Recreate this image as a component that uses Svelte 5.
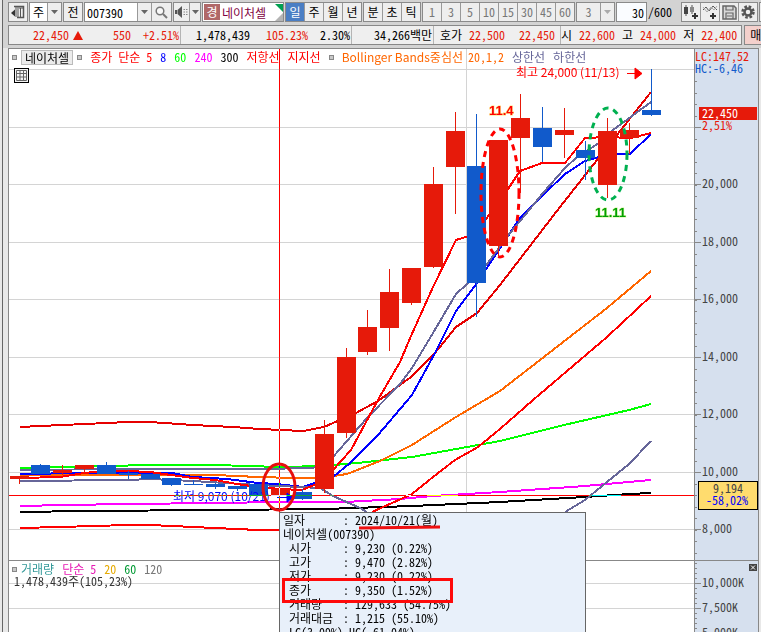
<script>
  const minutes = [1, 3, 5, 10, 15, 30, 45, 60];
  let period = $state('일');
  let code = $state('007390');
  let name = $state('네이처셀');
  let count = $state('30');

  // center x, body top, body bottom, high, low, rising
  const candles = [
    [19, 476, 479, 476, 484, 1], [40, 465, 474, 464, 474, 0], [62, 470, 473, 465, 475, 1],
    [84, 465, 469, 465, 473, 1], [106, 465, 474, 462, 474, 0], [128, 473, 475, 471, 479, 0],
    [150, 474, 479, 474, 479, 0], [171, 478, 485, 478, 486, 0], [193, 484, 485, 480, 485, 0],
    [215, 484, 487, 483, 489, 0], [237, 486, 489, 486, 491, 0], [258, 484, 496, 484, 496, 0],
    [280, 489, 496, 488, 496, 1], [302, 492, 499, 489, 500, 0], [324, 434, 489, 420, 493, 1],
    [346, 357, 433, 348, 438, 1], [367, 327, 352, 310, 355, 1], [389, 292, 328, 269, 351, 1],
    [411, 268, 303, 268, 305, 1], [433, 184, 267, 167, 268, 1], [455, 131, 167, 112, 214, 1],
    [476, 166, 283, 114, 317, 0], [498, 140, 246, 140, 256, 1], [520, 118, 138, 94, 193, 1],
    [542, 128, 147, 107, 162, 0], [564, 130, 135, 108, 158, 1], [585, 150, 158, 141, 180, 0],
    [607, 131, 185, 118, 198, 1], [629, 130, 138, 123, 154, 1], [651, 110, 115, 69, 116, 0]
  ];

  const lines = [
    ['#000000', '20,512 85,511 215,510 325,509 412,506 500,502 585,497 629,494 651,493'],
    ['#ff00ff', '20,506 65,505 128,504 215,503 280,502 345,502 400,499 433,496 500,492 585,486 651,480'],
    ['#00ff00', '20,468 150,465 215,465 280,467 324,466 367,462 412,457 456,449 500,441 564,425 629,410 651,404'],
    ['#e60000', '20,427 40,426 85,424 128,422 150,422 193,425 233,427 260,429 303,431 324,427 356,413 378,401 411,377 435,353 456,327 477,313 500,285 560,207 597,160 617,135 651,92'],
    ['#ff0000', '20,528 60,527 128,525 150,525 215,528 258,530 280,530'],
    ['#ff0000', '372,512 412,494 433,477 455,460 478,447 500,429 533,400 607,337 651,296'],
    ['#ff6600', '20,475 85,475 215,475 258,477 293,478 320,478 347,474 380,461 412,445 456,417 500,391 540,360 607,308 651,271'],
    ['#0000ff', '20,474 83,473 172,473 193,477 227,479 258,483 277,484 303,487 333,477 350,463 378,435 412,395 435,353 456,311 477,283 508,236 520,218 543,195 565,174 585,161 599,157 615,154 630,154 651,134'],
    ['#666699', '20,481 128,480 150,479 193,481 258,485 280,486 320,488 333,496 360,508 367,512'],
    ['#666699', '565,512 585,500 607,482 629,464 651,441'],
    ['#666699', '20,470 128,469 258,469 313,468 333,457 367,418 400,384 412,368 433,333 456,294 467,284 487,264 510,233 521,220 543,193 565,168 577,157 599,143 613,130 651,102'],
    ['#ff0000', '20,478 60,477 84,473 106,471 128,471 150,472 171,475 193,478 215,480 237,484 258,487 280,489 302,490 324,481 333,470 351,450 379,398 400,362 411,336 433,287 456,240 476,234 486,219 508,189 520,171 542,163 565,163 585,138 607,137 631,138 651,133']
  ];

  const priceTicks = [[184, '20,000'], [242, '18,000'], [299, '16,000'], [357, '14,000'], [414, '12,000'], [472, '10,000'], [529, '8,000']];
  const volumeTicks = [[583, '10,000K'], [608, '7,500K'], [633, '5,000K']];
  const minor = Array.from({ length: 42 }, (_, i) => Math.round(81 + i * 11.5));
  const volMinor = Array.from({ length: 14 }, (_, i) => 563 + i * 5);

  const info = [
    ['시가', '9,230 (0.22%)'],
    ['고가', '9,470 (2.82%)'],
    ['저가', '9,230 (0.22%)'],
    ['종가', '9,350 (1.52%)'],
    ['거래량', '129,633 (54.75%)'],
    ['거래대금', '1,215 (55.10%)']
  ];
</script>

{#snippet caret()}
  <svg width="7" height="4" viewBox="0 0 7 4"><path d="M0 0h7L3.500 4z" fill="currentColor" /></svg>
{/snippet}

<main>
  <header class="tools">
    <button class="box w20" aria-label="패널">
      <svg width="14" height="14" viewBox="0 0 14 14"><path d="M3 1.500h9.500v11H6" fill="none" stroke="#555" stroke-width="1.500" /><path d="M4 3h8M9.500 3v9" stroke="#555" /><path d="M5 4v8M7 4v8" stroke="#555" stroke-width="1" /><path d="M0 8l4-3.500v7z" fill="#333" /></svg>
    </button>
    <div class="group white">
      <select class="w17" aria-label="주기"><option>주</option></select>
      <span class="drop w14">{@render caret()}</span>
    </div>
    <button class="box w20">전</button>
    <div class="group white">
      <input class="code" bind:value={code} aria-label="종목코드" />
      <button class="w14" aria-label="코드 목록">{@render caret()}</button>
      <button class="w20" aria-label="검색">
        <svg width="13" height="13" viewBox="0 0 13 13"><circle cx="5" cy="5" r="3.800" fill="#f8f8f8" stroke="#777" stroke-width="1.500" /><path d="M8 8l4 4" stroke="#777" stroke-width="2" /></svg>
      </button>
    </div>
    <div class="group">
      <button class="w15" aria-label="소리">
        <svg width="13" height="12" viewBox="0 0 13 12"><path d="M0 4h2v4H0zM2.500 4L7 0v12L2.500 8z" fill="#555" /><path d="M8.500 3.500h1.500M11 3.500h1.500M8.500 6h1.500M11 6h1.500M8.500 8.500h1.500M11 8.500h1.500" stroke="#888" stroke-width="1.200" /></svg>
      </button>
      <button class="w10" aria-label="소리 설정">{@render caret()}</button>
    </div>
    <div class="group white stock">
      <span class="tag">경</span>
      <input bind:value={name} aria-label="종목명" />
      <svg width="8" height="17" viewBox="0 0 8 17"><path d="M0 0h8v8z" fill="#00a050" /><path d="M8 9v8H0z" fill="#b4b4b4" /></svg>
    </div>
    <div class="group">
      {#each ['일', '주', '월', '년'] as p}
        <button class="w18" class:on={period === p} onclick={() => (period = p)}>{p}</button>
      {/each}
    </div>
    <div class="group">
      {#each ['분', '초', '틱'] as p}
        <button class="w18" class:on={period === p} onclick={() => (period = p)}>{p}</button>
      {/each}
    </div>
    <div class="group dim">
      {#each minutes as m}<button class="w18">{m}</button>{/each}
    </div>
    <div class="group dim">
      <select class="w23" aria-label="분 간격"><option>3</option></select>
      <span class="drop w14">{@render caret()}</span>
    </div>
    <label class="range"><input bind:value={count} aria-label="봉 개수" /><span>/600</span></label>
    <div class="group icons">
      <button class="w18" aria-label="봉 추가"><svg width="16" height="16" viewBox="0 0 16 16"><path d="M3 1v11M9 1v9" stroke="#555" /><path d="M1 3h4v7H1z" fill="#444" /><path d="M7 3h4v5H7z" fill="#888" /><path d="M12 9v6M9 12h6" stroke="#333" stroke-width="2" /></svg></button>
      <button class="w18" aria-label="지표 추가"><svg width="16" height="16" viewBox="0 0 16 16"><path d="M1 6l3-3 3 4 4-5 4 4" fill="none" stroke="#555" /><path d="M1 3l4 5 4-5 3 3 3-4" fill="none" stroke="#aaa" /><path d="M11 9v6M8 12h6" stroke="#333" stroke-width="2" /></svg></button>
      <button class="w18" aria-label="저장"><svg width="15" height="15" viewBox="0 0 15 15"><path d="M1 1h11l2 2v11H1z" fill="#d8d8d8" stroke="#666" stroke-width="1.500" /><path d="M4 1v4h7V1M4 14V8h7v6M5 11h5" fill="none" stroke="#666" stroke-width="1.200" /></svg></button>
      <button class="w18" aria-label="설정"><svg width="14" height="14" viewBox="0 0 14 14"><circle cx="7" cy="7" r="5.500" fill="none" stroke="#555" stroke-width="2.500" stroke-dasharray="2.600 1.720" /><circle cx="7" cy="7" r="3.500" fill="none" stroke="#555" stroke-width="2.500" /></svg></button>
    </div>
    <button class="box more" aria-label="더보기"></button>
  </header>

  <section class="quotes">
    <div class="bar">
      <div class="cell red first"><span>22,450</span><svg width="10" height="9" viewBox="0 0 10 9"><path d="M5 0l5 9H0z" fill="#e61a0a" /></svg><span class="change">550</span><span>+2.51%</span></div>
      <div class="cell second"><span>1,478,439</span><span class="red">105.23%</span><span>2.30%</span></div>
      <div class="cell third"><span>34,266백만</span></div>
      <div class="cell fourth"><span>호가</span><span class="red">22,500</span><span class="red far">22,450</span></div>
      <div class="cell fifth"><span>시</span><span class="red">22,600</span><span>고</span><span class="red">24,000</span><span>저</span><span class="red">22,400</span></div>
    </div>
    <button class="sell">매</button>
  </section>

  <section class="chart">
    <div class="plot">
      <svg class="canvas" width="100%" height="584">
        <svg y="-49" width="100%" height="700" overflow="visible">
          <g stroke="#d4d4d4" shape-rendering="crispEdges">
            {#each [69, 127, 184, 242, 299, 357, 414, 472, 529, 583, 608] as y}
              <line x1="0" x2="100%" y1={y + 0.5} y2={y + 0.5} />
            {/each}
            <line x1="457.5" x2="457.5" y1="48" y2="633" />
            <line x1="0" x2="100%" y1="560.5" y2="560.5" stroke="#888" />
          </g>
        </svg>
        <g transform="translate(-9,-49)">
          <g fill="none" stroke-width="2" shape-rendering="crispEdges">
            {#each lines as [color, points]}<polyline stroke={color} {points} />{/each}
          </g>
          <g shape-rendering="crispEdges">
            {#each candles as [x, top, bottom, high, low, up]}
              <g fill={up ? '#e61a0a' : '#115acb'}>
                <rect x={x} y={high} width="1" height={low - high} />
                <rect x={x - 9} y={top} width="19" height={bottom - top} />
              </g>
            {/each}
          </g>
          <text class="label" x="516" y="77" fill="#ff0000">최고 24,000 (11/13)</text>
          <path d="M627 73.500h8M635 68v11l7-5.500z" stroke="#ff0000" fill="#ff0000" />
          <text class="label" x="173" y="501" fill="#0000ff">최저 9,070 (10/21)</text>
          <path d="M277 497.500h10M287 493v9l6-4.500z" stroke="#0000ff" fill="#0000ff" />
          <text x="14" y="586" fill="#333">1,478,439주(105,23%)</text>
        </g>
        <g class="cross" fill="#00ffff" shape-rendering="crispEdges">
          <rect x="270" y="0" width="1" height="584" />
          <rect x="0" y="446" width="100%" height="1" />
        </g>
      </svg>

      <div class="legend">
        <i></i><span class="chip">네이처셀</span><i></i>
        <span class="r">종가 단순 5</span><span class="b">8</span><span class="g">60</span><span class="m">240</span><span>300</span><span class="r">저항선</span><span class="r">지지선</span>
        <i></i><span class="o label">Bollinger Bands중심선</span><span class="o">20,1,2</span><span class="p">상한선</span><span class="p">하한선</span>
      </div>
      <button class="grid" aria-label="표 보기">
        <svg width="11" height="11" viewBox="0 0 11 11"><path d="M.5.500h10v10H.500zM.500 3.500h10M.500 7h10M4 .500v10M7.500.500v10" fill="none" stroke="#666" /></svg>
      </button>
      <div class="legend volume">
        <i></i><span class="t">거래량</span><span class="v5">단순 5</span><span class="v20">20</span><span class="v60">60</span><span class="v120">120</span>
      </div>

      <div class="info">
        <div class="row"><span class="key">일자</span><span>: 2024/10/21(월)</span></div>
        <div>네이처셀(007390)</div>
        {#each info as [key, value]}
          <div class="row"><span class="key sub">{key}</span><span>: {value}</span></div>
        {/each}
        <div class="sub">LC(3.09%) HC(-61.04%)</div>
      </div>

      <svg class="marks" width="100%" height="584">
        <g transform="translate(-9,-49)" fill="none">
          <ellipse cx="279" cy="487" rx="16" ry="23" stroke="#e60f0f" stroke-width="3" />
          <ellipse cx="500" cy="193" rx="19" ry="64" stroke="#ff0000" stroke-width="3" stroke-dasharray="6 5" />
          <ellipse cx="608" cy="154" rx="19" ry="46" stroke="#00b050" stroke-width="3" stroke-dasharray="6 5" />
          <path d="M359 528l81-1" stroke="#f01010" stroke-width="3" />
          <rect x="283.500" y="579.500" width="168" height="22" stroke="#ff0a0a" stroke-width="3" />
          <text class="note" x="489" y="115" fill="#ff0000" stroke="#ffe680">11.4</text>
          <text class="note" x="595" y="217" fill="#00a000" stroke="#d8f5a0">11.11</text>
        </g>
      </svg>
    </div>

    <aside class="axis">
      <svg width="100%" height="584">
        <g transform="translate(-695,-49)">
          <g stroke="#888" shape-rendering="crispEdges">
            {#each minor as y}{#if y < 558}<line x1="695" x2="697" y1={y + 0.5} y2={y + 0.5} />{/if}{/each}
            {#each volMinor as y}<line x1="695" x2="697" y1={y + 0.5} y2={y + 0.5} />{/each}
            <line x1="695" x2="701" y1="127.500" y2="127.500" />
            {#each [...priceTicks, ...volumeTicks] as [y]}<line x1="695" x2="701" y1={y + 0.5} y2={y + 0.5} />{/each}
            <line x1="695" x2="900" y1="560.500" y2="560.500" />
          </g>
          {#each [...priceTicks, ...volumeTicks] as [y, label]}<text x="702" y={y + 4} fill="#444">{label}</text>{/each}
          <text x="695" y="61" fill="#e61a0a">LC:147,52</text>
          <text x="695" y="73" fill="#115acb">HC:-6,46</text>
          <rect x="699" y="107" width="58" height="13" fill="#e61a0a" />
          <text x="702" y="118" fill="#fff">22,450</text>
          <text x="702" y="130" fill="#e61a0a">2,51%</text>
          <rect x="698.500" y="481.500" width="59" height="28" fill="#ffdc6e" stroke="#000" />
          <text x="713" y="493" fill="#444">9,194</text>
          <text x="706" y="505" fill="#0000ff">-58,02%</text>
          <rect x="749" y="564" width="8" height="7" fill="#444" />
          <path d="M751 565.500l4 4M755 565.500l-4 4" stroke="#fff" />
        </g>
      </svg>
    </aside>
  </section>
</main>

<style>
  :global(body) { margin: 0; background: #e8e8e8; }
  main {
    font: 12px/14px 'Noto Sans Mono CJK KR', 'Noto Sans CJK KR', monospace;
    color: #000;
    border-left: 1px solid #666;
    margin-left: 2px;
    background: #e8e8e8;
    overflow: hidden;
  }
  button, input, select {
    font: inherit; color: inherit; margin: 0; padding: 0; border: 0; border-radius: 0;
    background: transparent; box-sizing: border-box; height: 18px; outline: 0;
  }
  button { display: flex; align-items: center; justify-content: center; background: #eeeeee; }
  select { appearance: none; text-align: center; }
  svg { display: block; flex: none; }
  .tools {
    display: flex; gap: 1px; height: 25px; padding: 2px 0 0 5px; box-sizing: border-box;
    background: #d3d3d3; white-space: nowrap;
  }
  .group, .box { display: flex; flex: none; border: 1px solid #8a8a8a; height: 20px; box-sizing: border-box; background: #eee; }
  .group > * + * { border-left: 1px solid #999; }
  .white { background: #fff; }
  .w10 { width: 11px; } .w14 { width: 14px; } .w15 { width: 15px; } .w17 { width: 17px; }
  .w18 { width: 19px; } .w20 { width: 20px; } .w23 { width: 23px; }
  .group .w18:first-child { width: 18px; }
  .group.icons { margin-left: -1px; }
  .drop { display: flex; align-items: center; justify-content: center; box-sizing: border-box; background: #eee; color: #666; }
  .group button:has(svg) { color: #666; }
  .code { width: 52px; padding-left: 2px; }
  .stock { width: 82px; align-items: center; }
  .stock > * + * { border: 0; }
  .tag { background: #b06868; color: #fff; width: 16px; height: 16px; line-height: 15px; text-align: center; margin-left: 1px; }
  .stock input { width: 53px; padding-left: 2px; color: #800040; flex: 1; }
  .group .on { background: #4a7ec4; color: #fff; }
  .dim, .dim .drop { color: #777; }
  .dim .drop { color: #aaa; }
  .range { display: flex; align-items: center; height: 20px; width: 65px; flex: none; }
  .range input { width: 31px; height: 20px; border: 1px solid #8a8a8a; background: #fafcff; text-align: right; padding-right: 2px; }
  .range span { padding-left: 1px; }
  .more { width: 10px; }

  .quotes { display: flex; gap: 2px; height: 23px; padding-left: 5px; box-sizing: border-box; background: #d3d3d3; }
  .bar, .sell { border: 1px solid #888; height: 20px; box-sizing: border-box; }
  .bar { display: flex; flex: 1; background: #efefef; line-height: 18px; }
  .sell { width: 38px; margin-right: -20px; background: #f4d0cc; justify-content: flex-start; padding-left: 5px; }
  .cell { display: flex; align-items: center; justify-content: flex-end; border-right: 1px solid #b4b4b4; box-sizing: border-box; white-space: nowrap; flex: none; }
  .red { color: #e61a0a; }
  .first { width: 172px; gap: 4px; padding-right: 1px; }
  .first .change { margin-left: 26px; margin-right: 8px; }
  .second { width: 171px; gap: 12px; padding-right: 1px; }
  .second .red { margin-left: 4px; }
  .third { width: 82px; padding-right: 1px; }
  .fourth { width: 127px; gap: 7px; padding-right: 5px; }
  .fourth .far { margin-left: 7px; }
  .fifth { flex: 1; gap: 7px; padding-right: 4px; border: 0; }

  .chart { display: flex; margin: 0 2px 0 5px; border: 1px solid #888; border-bottom: 0; background: #fff; }
  .plot { position: relative; flex: 1; min-width: 0; height: 583px; overflow: hidden; isolation: isolate; background: #fff; }
  .axis { flex: none; width: 63px; height: 583px; overflow: hidden; border-left: 1px solid #888; background: #d6e0ee; }
  text { font-family: inherit; font-size: 12px; }
  .label { font-family: 'Noto Sans CJK KR', sans-serif; }
  .note { font: bold 13px 'Liberation Sans', sans-serif; paint-order: stroke; stroke-width: 1px; }
  .cross { mix-blend-mode: difference; }
  .marks { position: absolute; left: 0; top: 0; pointer-events: none; }
  .legend { position: absolute; left: 3px; top: 0; height: 16px; display: flex; align-items: center; gap: 8px; white-space: nowrap; }
  .legend i { width: 5px; height: 5px; box-sizing: border-box; border: 1px solid #888; background: #c8c8c8; margin-right: -4px; }
  .chip { border: 1px solid #bbb; background: #ebebeb; padding: 0 3px; margin-right: -4px; line-height: 13px; }
  .legend i + .r, .legend i + .o { margin-left: 4px; }
  .r { color: #ff0000; } .b { color: #0000ff; } .g { color: #00ff00; } .m { color: #ff00ff; }
  .o { color: #ff6600; } .p { color: #666699; }
  .o + .o { margin-left: -3px; }
  .volume { top: 512px; }
  .t { color: #339999; } .v5 { color: #e619b3; } .v20 { color: #e6aa00; } .v60 { color: #009933; } .v120 { color: #777; }
  .grid { position: absolute; left: 5px; top: 19px; width: 15px; height: 15px; border: 1px solid #000; background: #f4f4f4; }
  .info {
    position: absolute; left: 270px; top: 463px; width: 307px; height: 140px; box-sizing: border-box;
    border: 1px solid #666; background: #e8f0fa; padding-left: 3px; white-space: nowrap; line-height: 14px;
  }
  .row { display: flex; }
  .key { width: 60px; flex: none; box-sizing: border-box; }
  .sub { padding-left: 6px; }
</style>
